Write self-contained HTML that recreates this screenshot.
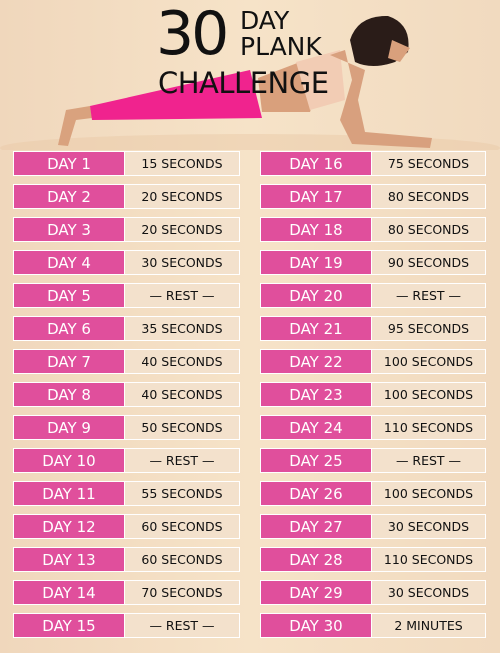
<!DOCTYPE html><html><head><style>
body{margin:0;width:500px;height:653px;overflow:hidden;position:relative;background:linear-gradient(90deg,#f0d7bc 0%,#f6e3c8 50%,#f1dabf 100%);font-family:"DejaVu Sans","Liberation Sans",sans-serif}
.r{position:absolute;height:23px;border:1px solid #fff;background:#f3e1cc;display:flex;box-sizing:content-box}
.p{width:110px;background:#e04f9c;color:#fff;font-size:15px;display:flex;align-items:center;justify-content:center;border-right:1px solid #fff}
.s{flex:1;color:#111;font-size:12.5px;display:flex;align-items:center;justify-content:center}
.t{position:absolute;color:#111;font-family:"DejaVu Sans",sans-serif}
</style></head><body>
<svg width="500" height="150" style="position:absolute;left:0;top:0">
<ellipse cx="250" cy="148" rx="250" ry="14" fill="#e9c9a8" opacity=".5"/>
<path d="M58 145 L66 110 L90 106 L92 118 L76 120 L68 146Z" fill="#d9a27e"/>
<path d="M90 106 L250 70 L262 118 L92 120Z" fill="#f0238e"/>
<path d="M258 78 L300 62 L320 80 L310 112 L262 112Z" fill="#d9a07c"/>
<path d="M296 62 L340 50 L345 100 L310 110Z" fill="#f2ccb4"/>
<path d="M330 55 L345 50 L352 80 L340 120 L352 144 L430 148 L432 138 L365 132 L358 100 L365 70Z" fill="#d8a07e"/>
<path d="M350 40 Q358 15 388 16 Q412 24 408 52 L395 62 Q372 70 355 62Z" fill="#2a1c18"/>
<path d="M392 40 L410 48 L400 62 L388 58Z" fill="#d9a07c"/>
</svg>
<div class="t" style="left:156px;top:2px;font-size:60px;line-height:64px;letter-spacing:-3px">30</div>
<div class="t" style="left:240px;top:8px;font-size:25px;line-height:26px">DAY</div>
<div class="t" style="left:240px;top:34px;font-size:25px;line-height:26px">PLANK</div>
<div class="t" style="left:158px;top:68px;font-size:29px;line-height:31px;letter-spacing:-0.5px">CHALLENGE</div>
<div class="r" style="left:13px;top:151px;width:225px"><div class="p">DAY 1</div><div class="s">15 SECONDS</div></div>
<div class="r" style="left:13px;top:184px;width:225px"><div class="p">DAY 2</div><div class="s">20 SECONDS</div></div>
<div class="r" style="left:13px;top:217px;width:225px"><div class="p">DAY 3</div><div class="s">20 SECONDS</div></div>
<div class="r" style="left:13px;top:250px;width:225px"><div class="p">DAY 4</div><div class="s">30 SECONDS</div></div>
<div class="r" style="left:13px;top:283px;width:225px"><div class="p">DAY 5</div><div class="s">— REST —</div></div>
<div class="r" style="left:13px;top:316px;width:225px"><div class="p">DAY 6</div><div class="s">35 SECONDS</div></div>
<div class="r" style="left:13px;top:349px;width:225px"><div class="p">DAY 7</div><div class="s">40 SECONDS</div></div>
<div class="r" style="left:13px;top:382px;width:225px"><div class="p">DAY 8</div><div class="s">40 SECONDS</div></div>
<div class="r" style="left:13px;top:415px;width:225px"><div class="p">DAY 9</div><div class="s">50 SECONDS</div></div>
<div class="r" style="left:13px;top:448px;width:225px"><div class="p">DAY 10</div><div class="s">— REST —</div></div>
<div class="r" style="left:13px;top:481px;width:225px"><div class="p">DAY 11</div><div class="s">55 SECONDS</div></div>
<div class="r" style="left:13px;top:514px;width:225px"><div class="p">DAY 12</div><div class="s">60 SECONDS</div></div>
<div class="r" style="left:13px;top:547px;width:225px"><div class="p">DAY 13</div><div class="s">60 SECONDS</div></div>
<div class="r" style="left:13px;top:580px;width:225px"><div class="p">DAY 14</div><div class="s">70 SECONDS</div></div>
<div class="r" style="left:13px;top:613px;width:225px"><div class="p">DAY 15</div><div class="s">— REST —</div></div>
<div class="r" style="left:260px;top:151px;width:224px"><div class="p">DAY 16</div><div class="s">75 SECONDS</div></div>
<div class="r" style="left:260px;top:184px;width:224px"><div class="p">DAY 17</div><div class="s">80 SECONDS</div></div>
<div class="r" style="left:260px;top:217px;width:224px"><div class="p">DAY 18</div><div class="s">80 SECONDS</div></div>
<div class="r" style="left:260px;top:250px;width:224px"><div class="p">DAY 19</div><div class="s">90 SECONDS</div></div>
<div class="r" style="left:260px;top:283px;width:224px"><div class="p">DAY 20</div><div class="s">— REST —</div></div>
<div class="r" style="left:260px;top:316px;width:224px"><div class="p">DAY 21</div><div class="s">95 SECONDS</div></div>
<div class="r" style="left:260px;top:349px;width:224px"><div class="p">DAY 22</div><div class="s">100 SECONDS</div></div>
<div class="r" style="left:260px;top:382px;width:224px"><div class="p">DAY 23</div><div class="s">100 SECONDS</div></div>
<div class="r" style="left:260px;top:415px;width:224px"><div class="p">DAY 24</div><div class="s">110 SECONDS</div></div>
<div class="r" style="left:260px;top:448px;width:224px"><div class="p">DAY 25</div><div class="s">— REST —</div></div>
<div class="r" style="left:260px;top:481px;width:224px"><div class="p">DAY 26</div><div class="s">100 SECONDS</div></div>
<div class="r" style="left:260px;top:514px;width:224px"><div class="p">DAY 27</div><div class="s">30 SECONDS</div></div>
<div class="r" style="left:260px;top:547px;width:224px"><div class="p">DAY 28</div><div class="s">110 SECONDS</div></div>
<div class="r" style="left:260px;top:580px;width:224px"><div class="p">DAY 29</div><div class="s">30 SECONDS</div></div>
<div class="r" style="left:260px;top:613px;width:224px"><div class="p">DAY 30</div><div class="s">2 MINUTES</div></div>
</body></html>
